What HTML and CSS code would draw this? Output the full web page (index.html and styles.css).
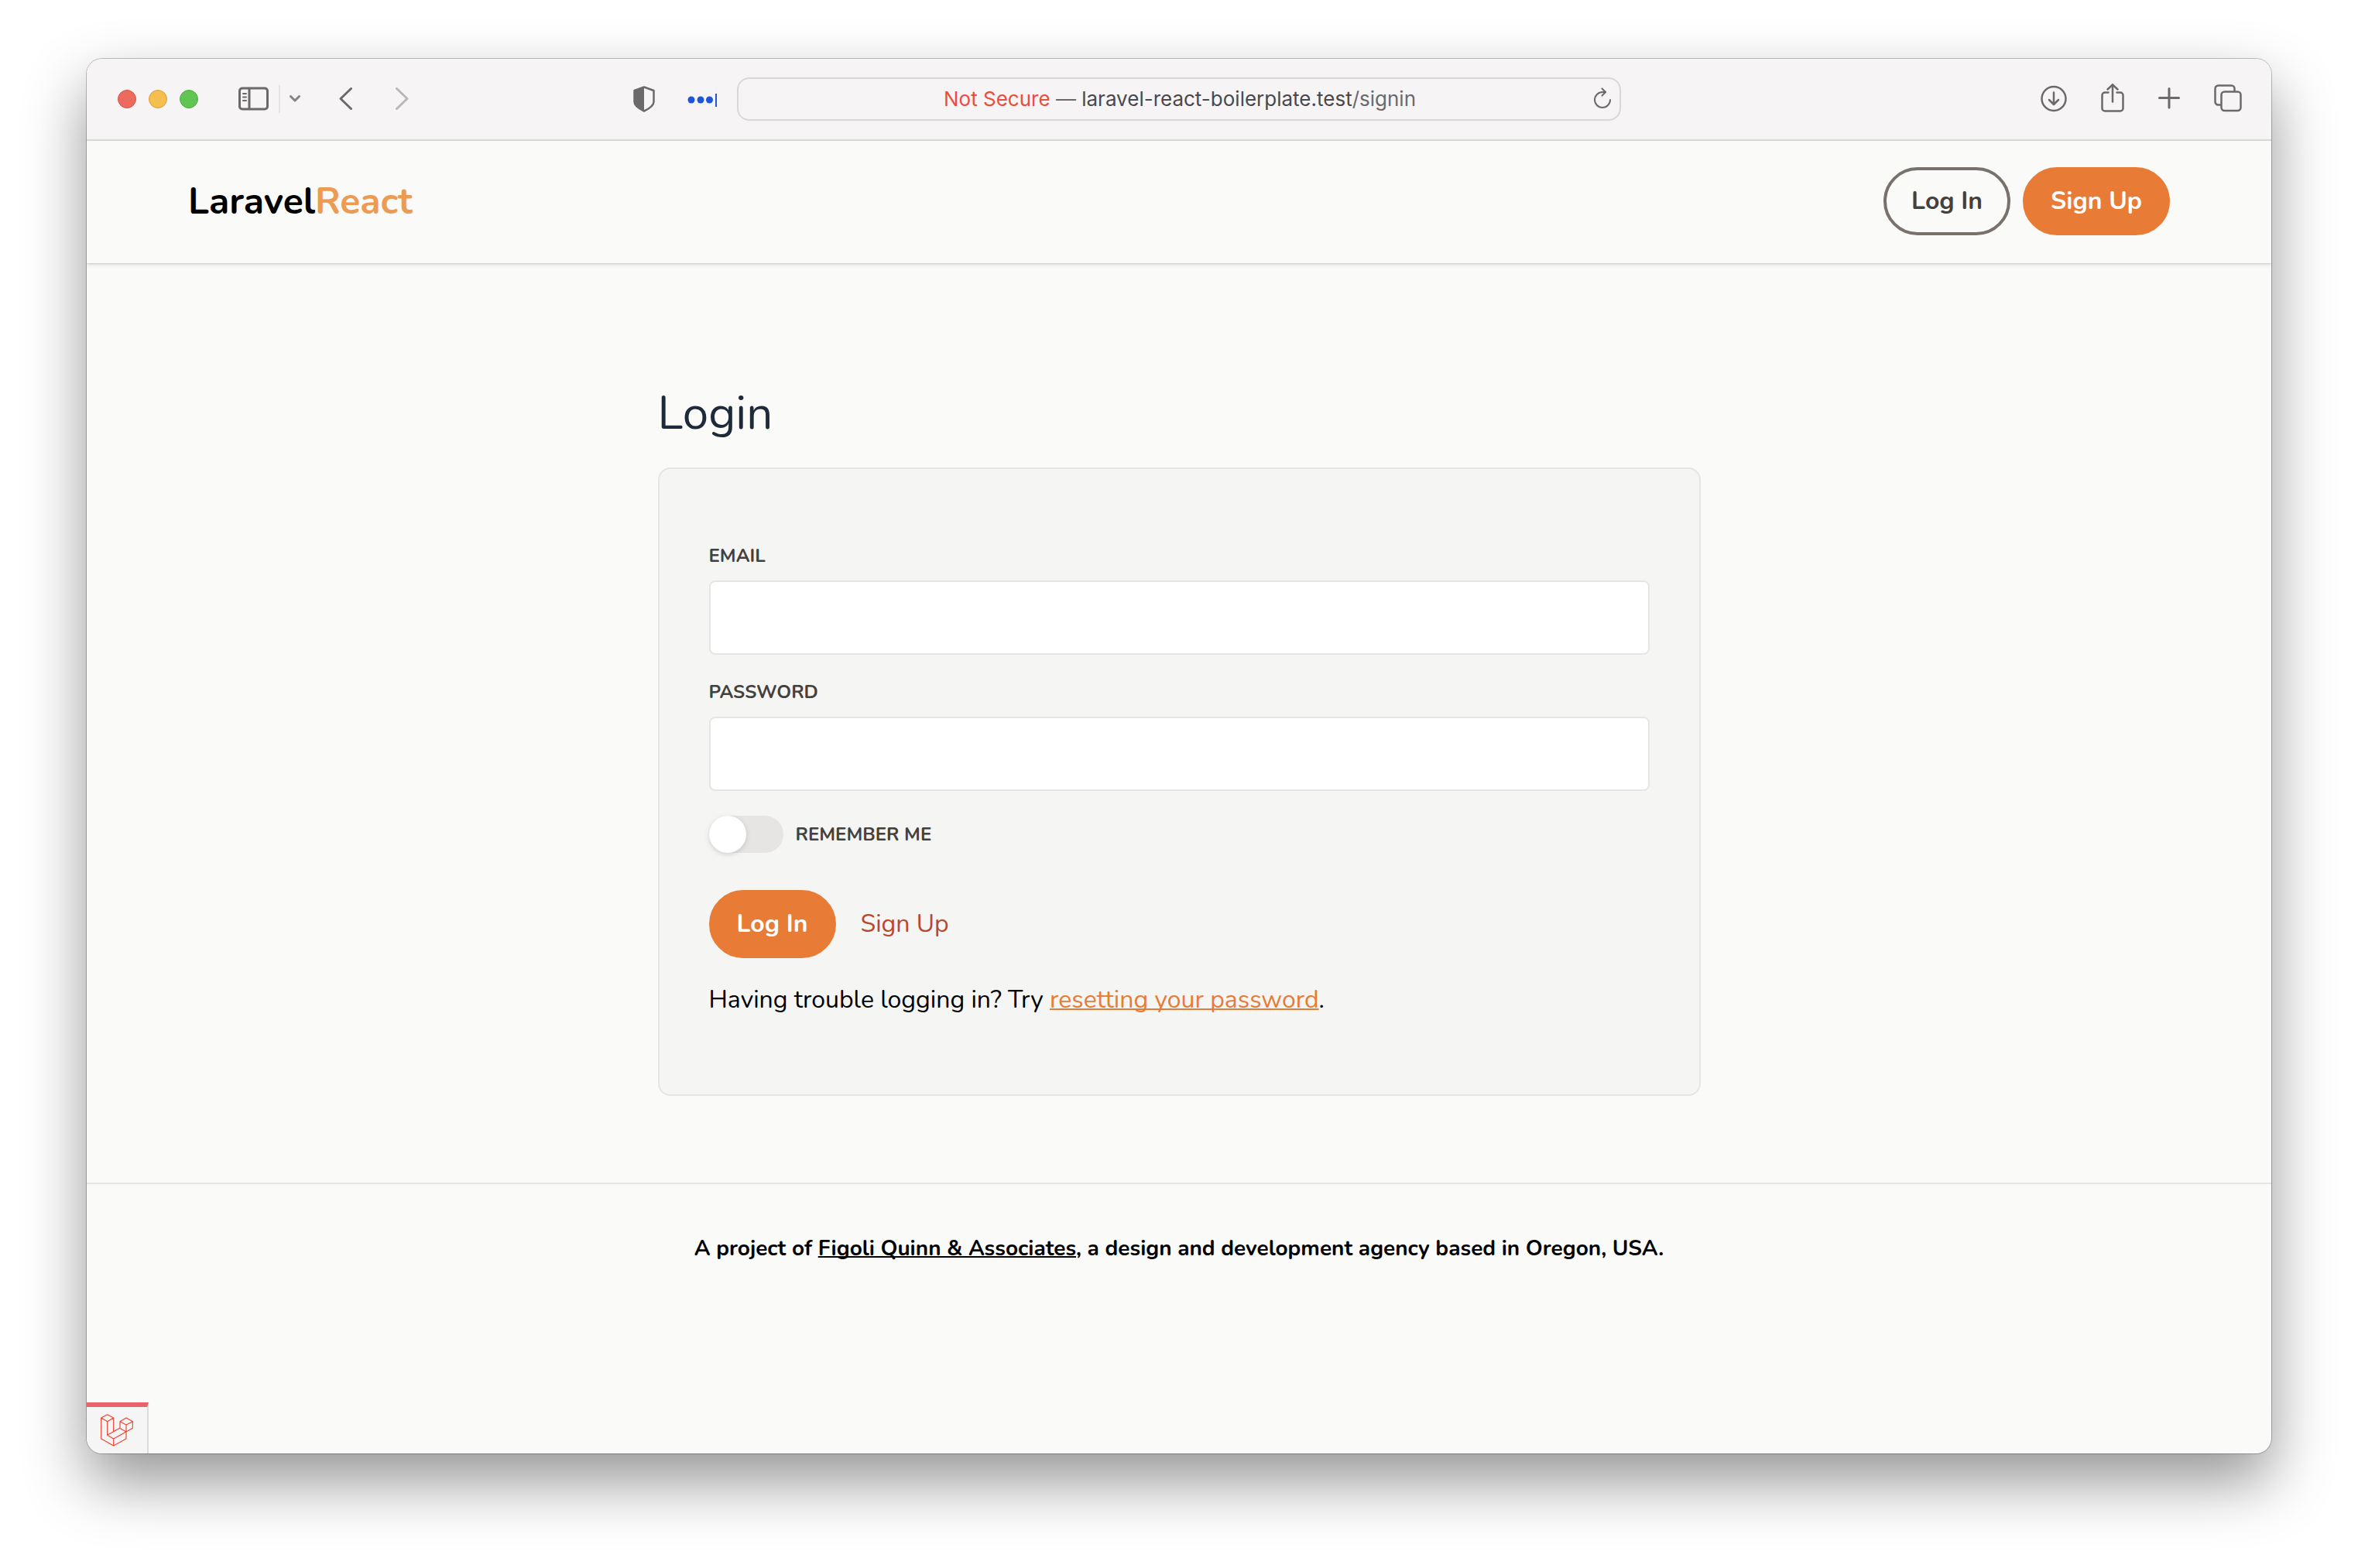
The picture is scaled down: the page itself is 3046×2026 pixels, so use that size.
FILE: index.html
```html
<!DOCTYPE html>
<html lang="en">
<head>
<meta charset="utf-8">
<meta name="viewport" content="width=device-width, initial-scale=1">
<title>Login - LaravelReact</title>
<link rel="stylesheet" href="styles.css">
</head>
<body>
<div class="window">
  <div class="toolbar">
    <div class="tools tools-left">
      <div class="lights">
        <span class="light light-close"></span>
        <span class="light light-min"></span>
        <span class="light light-max"></span>
      </div>
      <div class="sidebar-tools">
        <button class="tool" type="button" aria-label="Sidebar">
          <svg width="40" height="32" viewBox="0 0 40 32" fill="none" stroke="currentColor" stroke-width="3"><rect x="1.500" y="2" width="36" height="27" rx="3.500"/><path d="M14 2v27"/><path stroke-width="2" stroke-linecap="round" d="M6 9h4M6 13.500h4M6 18h4"/></svg>
        </button>
        <span class="divider"></span>
        <button class="tool" type="button" aria-label="Tab groups">
          <svg class="muted" width="14" height="12" viewBox="1 1 14 12" fill="none" stroke="currentColor" stroke-width="3" stroke-linecap="round" stroke-linejoin="round"><path d="M2.500 3.500l5.500 5.500L13.500 3.500"/></svg>
        </button>
      </div>
      <div class="history">
        <button class="tool" type="button" aria-label="Back">
          <svg width="18" height="30" viewBox="0 0 18 30" fill="none" stroke="currentColor" stroke-width="3" stroke-linecap="round" stroke-linejoin="round"><path d="M15.500 1.500L2 14.500l13.500 13"/></svg>
        </button>
        <button class="tool" type="button" aria-label="Forward">
          <svg class="faint" width="18" height="30" viewBox="0 0 18 30" fill="none" stroke="currentColor" stroke-width="3" stroke-linecap="round" stroke-linejoin="round"><path d="M2.500 1.500L16 14.500 2.500 27.500"/></svg>
        </button>
      </div>
      <div class="extensions">
        <button class="tool" type="button" aria-label="Privacy report">
          <svg width="28" height="34" viewBox="0 0 28 34"><path d="M14 1.500L1.500 6v14.500c0 5 5 8.500 12.500 12 7.500-3.500 12.500-7 12.500-12V6z" fill="none" stroke="currentColor" stroke-width="2.500" stroke-linejoin="round"/><path d="M14 1.500L1.500 6v14.500c0 5 5 8.500 12.500 12z" fill="currentColor"/></svg>
        </button>
        <button class="tool" type="button" aria-label="Password manager">
          <svg width="40" height="20" viewBox="0 0 40 20" fill="#1f55d8"><circle cx="5" cy="11" r="4.500"/><circle cx="17" cy="11" r="4.500"/><circle cx="28.500" cy="11" r="4.500"/><path d="M36 3h2v17h-2z"/></svg>
        </button>
      </div>
    </div>
    <div class="address">
      <span class="address-text"><span class="address-warn">Not Secure</span> <span class="address-dim">—</span> laravel-react-boilerplate.test<span class="address-dim">/signin</span></span>
      <button class="tool reload" type="button" aria-label="Reload">
        <svg width="24" height="30" viewBox="0 0 24 30" fill="none" stroke="currentColor" stroke-width="2" stroke-linecap="round" stroke-linejoin="round"><path d="M22 16a10 10 0 1 1-10-10h4"/><path d="M11.500 1.500L16 6l-4.500 4.500"/></svg>
      </button>
    </div>
    <div class="tools tools-right">
      <button class="tool" type="button" aria-label="Downloads">
        <svg width="34" height="40" viewBox="1 0 34 40" fill="none" stroke="currentColor" stroke-width="2.500" stroke-linecap="round" stroke-linejoin="round"><circle cx="18" cy="19.500" r="15.500"/><path d="M18 11.500v15M12 21l6 6 6-6"/></svg>
      </button>
      <button class="tool" type="button" aria-label="Share">
        <svg width="30" height="40" viewBox="1 0 30 40" fill="none" stroke="currentColor" stroke-width="2.500" stroke-linecap="round" stroke-linejoin="round"><path d="M10.500 11H6A3.500 3.500 0 0 0 2.500 14.500v17A3.500 3.500 0 0 0 6 35h20a3.500 3.500 0 0 0 3.500-3.500v-17a3.500 3.500 0 0 0-3.500-3.500h-4.500M16 23V.8M9.500 7L16 .8 22.500 7" transform="translate(0 .500)"/></svg>
      </button>
      <button class="tool" type="button" aria-label="New tab">
        <svg width="28" height="40" viewBox="0 0 28 40" fill="none" stroke="currentColor" stroke-width="3" stroke-linecap="round"><path d="M14 6.500v24.500M1.500 18.500h25"/></svg>
      </button>
      <button class="tool" type="button" aria-label="Show all tabs">
        <svg width="36" height="40" viewBox="0 0 36 40" fill="none" stroke="currentColor" stroke-width="2.500" stroke-linejoin="round"><rect x="9.500" y="10.500" width="25" height="24.500" rx="4"/><path d="M9 27.500H5.500a4 4 0 0 1-4-4V6.500a4 4 0 0 1 4-4h17a4 4 0 0 1 4 4v3.500"/></svg>
      </button>
    </div>
  </div>

  <div class="page">
    <header class="site-header">
      <a class="brand" href="#">Laravel<span class="brand-accent">React</span></a>
      <nav class="site-nav">
        <a class="btn btn-outline" href="#">Log In</a>
        <a class="btn btn-primary" href="#">Sign Up</a>
      </nav>
    </header>

    <main class="content">
      <h1 class="title">Login</h1>
      <form class="card">
        <div class="field">
          <label class="label" for="email">EMAIL</label>
          <input class="input" id="email" type="email">
        </div>
        <div class="field">
          <label class="label" for="password">PASSWORD</label>
          <input class="input" id="password" type="password">
        </div>
        <div class="remember">
          <input class="switch" id="remember" type="checkbox">
          <label class="label" for="remember">REMEMBER ME</label>
        </div>
        <div class="actions">
          <button class="btn btn-primary" type="submit">Log In</button>
          <a class="signup-link" href="#">Sign Up</a>
        </div>
        <p class="help">Having trouble logging in? Try <a class="help-link" href="#">resetting your password</a>.</p>
      </form>
    </main>

    <footer class="site-footer">
      <p class="credit">A project of <a class="credit-link" href="#">Figoli Quinn &amp; Associates</a>, a design and development agency based in Oregon, USA.</p>
    </footer>

    <button class="debugbar" type="button" aria-label="Laravel Debugbar">
      <svg width="44" height="44" viewBox="147 137 132 132" fill="none" stroke="#f0432f" stroke-width="3.500" stroke-linejoin="round"><path d="M176 142l24 13v54M176 142l-24 13v81l48 27 49-27v-54M152 155l24 14 24-14M176 169v53l24 14v27M176 222l48-27 25 14-49 27M249 155l25 14-25 13-24-13zM225 169v26M274 169v26l-25 14"/></svg>
    </button>
  </div>
</div>
</body>
</html>
```
FILE: styles.css
```css
* {
  box-sizing: border-box;
}

body {
  margin: 0;
  min-height: 100vh;
  padding: 76px 112px 148px;
  display: grid;
  background: #fff;
  color: #000;
  font-family: Nunito, Lato, sans-serif;
  font-size: 32px;
  line-height: 48px;
}

button {
  font: inherit;
}

a {
  color: inherit;
  text-decoration: none;
}

/* Browser window */

.window {
  display: flex;
  flex-direction: column;
  border-radius: 20px;
  overflow: hidden;
  background: #fafaf9;
  box-shadow: 0 0 0 1px rgba(0, 0, 0, 0.24), 0 36px 80px rgba(0, 0, 0, 0.42);
}

.toolbar {
  display: grid;
  grid-template-columns: 1fr 1142px 1fr;
  align-items: center;
  height: 106px;
  background: #f6f4f5;
  border-bottom: 2px solid #dcdadb;
}

.tools {
  display: flex;
  align-items: center;
}

.tools-left {
  padding-left: 40px;
}

.tools-right {
  justify-content: flex-end;
  gap: 44px;
  padding-right: 38px;
}

.lights {
  display: flex;
  gap: 16px;
}

.light {
  width: 24px;
  height: 24px;
  border-radius: 50%;
}

.light-close {
  background: #ec6a5e;
  border: 1px solid #d5564a;
}

.light-min {
  background: #f4bf4f;
  border: 1px solid #d8a13b;
}

.light-max {
  background: #61c554;
  border: 1px solid #4fab42;
}

.sidebar-tools {
  display: flex;
  align-items: center;
  gap: 12px;
  margin-left: 52px;
}

.divider {
  width: 2px;
  height: 36px;
  background: #e6e4e6;
}

.history {
  display: flex;
  gap: 54px;
  margin-left: 50px;
}

.extensions {
  display: flex;
  align-items: center;
  gap: 42px;
  margin-left: auto;
  margin-right: 24px;
}

.tool {
  display: flex;
  padding: 0;
  border: 0;
  background: none;
  color: #6b696a;
}

.muted {
  color: #858385;
}

.faint {
  color: #b9b7b9;
}

.address {
  display: flex;
  align-items: center;
  height: 56px;
  padding: 0 10px 0 36px;
  border: 2px solid #d9d7d8;
  border-radius: 16px;
  font-family: Inter, sans-serif;
  font-size: 26px;
  line-height: 32px;
  color: #4a484a;
}

.address-text {
  flex: 1;
  text-align: center;
}

.address-warn {
  color: #eb4d3d;
}

.address-dim {
  color: #6b696b;
}

/* Page */

.page {
  position: relative;
  flex: 1;
}

.site-header {
  display: flex;
  align-items: center;
  justify-content: space-between;
  padding: 34px 131px 36px;
  box-shadow: 0 2px 6px rgba(0, 0, 0, 0.1), 0 1px 2px rgba(0, 0, 0, 0.12);
}

.brand {
  font-size: 48px;
  line-height: 64px;
  font-weight: 700;
}

.brand-accent {
  color: #ed9a52;
}

.site-nav {
  display: flex;
  gap: 16px;
}

.btn {
  display: inline-block;
  padding: 16px 32px;
  border: 4px solid transparent;
  border-radius: 44px;
  font-weight: 700;
  line-height: 48px;
}

.btn-outline {
  border-color: #78716c;
  color: #44403c;
}

.btn-primary {
  border-color: #e87b35;
  background: #e87b35;
  color: #fff;
}

.content {
  max-width: 1347px;
  margin: 0 auto;
  padding: 154px 0 112px;
}

.title {
  margin: 0 0 30px;
  color: #1e293b;
  font-size: 60px;
  line-height: 80px;
  font-weight: 400;
}

.card {
  padding: 94px 64px 98px;
  border: 2px solid #e5e5e3;
  border-radius: 16px;
  background: #f5f5f4;
}

.field {
  margin-bottom: 30px;
}

.label {
  display: block;
  color: #44403c;
  font-size: 24px;
  line-height: 36px;
  font-weight: 700;
}

.input {
  display: block;
  width: 100%;
  height: 96px;
  margin-top: 14px;
  padding: 0 24px;
  border: 2px solid #e5e5e3;
  border-radius: 8px;
  background: #fff;
  font: inherit;
}

.remember {
  display: flex;
  align-items: center;
  gap: 16px;
  padding-top: 2px;
}

.switch {
  appearance: none;
  width: 96px;
  height: 48px;
  margin: 0;
  border-radius: 24px;
  background: #e7e5e4;
}

.switch::before {
  content: "";
  display: block;
  width: 48px;
  height: 48px;
  border-radius: 50%;
  background: #fff;
  box-shadow: 0 2px 6px rgba(0, 0, 0, 0.15);
}

.switch:checked {
  background: #e87b35;
}

.switch:checked::before {
  margin-left: 48px;
}

.actions {
  display: flex;
  align-items: center;
  gap: 32px;
  margin-top: 48px;
}

.signup-link {
  color: #b9482b;
}

.help {
  margin: 30px 0 0;
}

.help-link {
  color: #e87b35;
  text-decoration: underline;
  text-decoration-thickness: 2px;
  text-decoration-skip-ink: none;
}

.site-footer {
  padding: 63px 64px;
  border-top: 2px solid #e5e5e3;
  text-align: center;
}

.credit {
  margin: 0;
  font-size: 28px;
  line-height: 40px;
  font-weight: 700;
}

.credit-link {
  text-decoration: underline;
  text-decoration-thickness: 2px;
  text-decoration-skip-ink: none;
}

/* Debug badge pinned over the page corner */

.debugbar {
  position: absolute;
  left: 0;
  bottom: 0;
  display: flex;
  align-items: center;
  justify-content: center;
  width: 80px;
  height: 66px;
  padding: 0;
  border: 0 solid #dcdcdc;
  border-top: 6px solid #e9636b;
  border-right-width: 2px;
  background: #f5f5f5;
}
```
